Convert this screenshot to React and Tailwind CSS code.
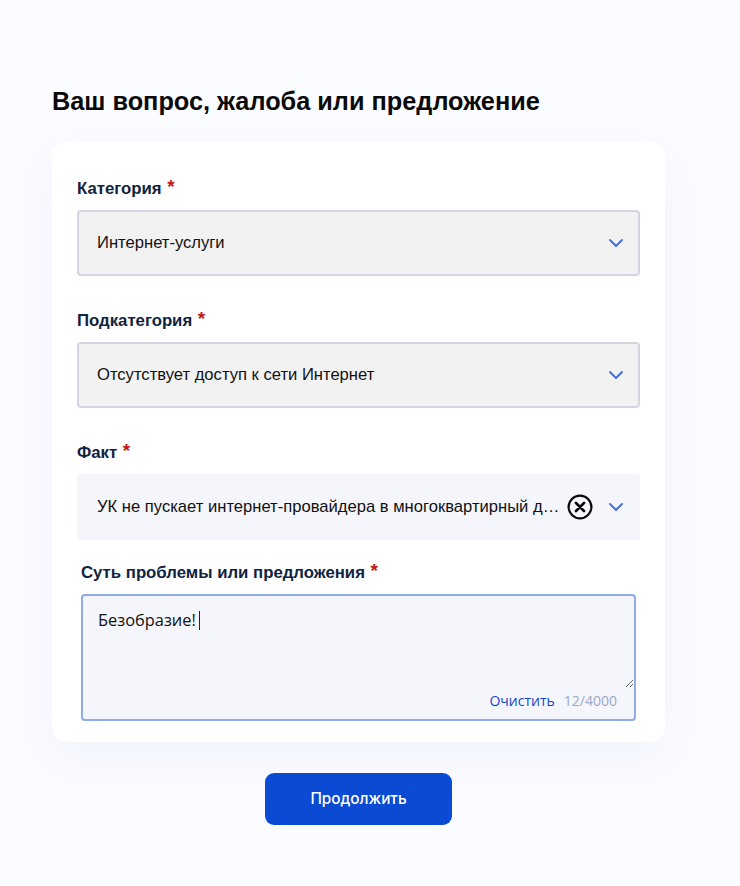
import { ChevronDown } from 'lucide-react';

const SANS = "font-['Liberation_Sans',sans-serif]";

const Label = ({ children, className = '' }) => (
  <div className={`${SANS} text-[16.75px] leading-[20px] font-bold text-[#10233f] ${className}`}>
    {children} <span className="relative -top-px ml-px text-[19px] leading-[16px] text-[#c01818]">*</span>
  </div>
);

const Select = ({ value, bordered, onClear }) => (
  <div className={`flex h-[66px] items-center rounded-[4px] ${bordered ? 'border-2 border-[#d3d5e2] bg-[#f2f2f3] pl-[18px] pr-[10px]' : 'bg-[#f5f6fb] pl-[20px] pr-[12px]'}`}>
    <div className={`${SANS} min-w-0 flex-1 truncate text-[16.6px] text-[#111]`}>{value}</div>
    {onClear && (
      <svg width="26" height="26" viewBox="0 0 26 26" fill="none" stroke="#0b0b0b" strokeWidth="2.2" strokeLinecap="round" className="ml-[7px] mr-[11px] shrink-0">
        <circle cx="13" cy="13" r="11.4" />
        <path d="M9 9l8 8M17 9l-8 8" strokeWidth="2.6" />
      </svg>
    )}
    <ChevronDown size={24} strokeWidth={1.8} className="shrink-0 text-[#3f6be0]" />
  </div>
);

export default function App() {
  return (
    <div className="min-h-[886px] bg-[#fbfcff] px-[52px] pt-[86px]">
      <h1 className={`${SANS} text-[25.3px] leading-[30px] font-bold text-[#0a0a0a]`}>Ваш вопрос, жалоба или предложение</h1>

      <div className="mt-[26px] h-[600px] w-[613px] rounded-[14px] bg-white px-[25px] pt-[37px] shadow-[0_16px_50px_rgba(70,100,220,0.06)]">
        <Label>Категория</Label>
        <div className="mt-[11px]"><Select value="Интернет-услуги" bordered /></div>

        <Label className="mt-[35px]">Подкатегория</Label>
        <div className="mt-[11px]"><Select value="Отсутствует доступ к сети Интернет" bordered /></div>

        <Label className="mt-[35px]">Факт</Label>
        <div className="mt-[11px]"><Select value="УК не пускает интернет-провайдера в многоквартирный дом" onClear /></div>

        <div className="px-[4px]">
          <Label className="mt-[23px]">Суть проблемы или предложения</Label>
          <div className="relative mt-[11px] flex h-[127px] flex-col rounded-[4px] border-2 border-[#8fabea] bg-[#f5f6fb]">
            <textarea
              readOnly
              defaultValue="Безобразие!"
              className="h-[92px] w-full resize-y bg-transparent px-[15px] py-[14px] font-['Open_Sans',sans-serif] text-[16.4px] leading-[20px] text-[#111] outline-none"
            />
            <span className="absolute left-[116px] top-[15px] h-[19px] w-px bg-[#222]" />
            <div className="flex flex-1 -translate-y-[3px] items-center justify-end gap-[9px] pr-[17px] font-['Open_Sans',sans-serif] text-[14px] leading-[18px] font-medium">
              <span className="text-[#0f46cc]">Очистить</span>
              <span className="text-[#9aa9cb]">12/4000</span>
            </div>
          </div>
        </div>
      </div>

      <div className="mt-[31px] flex w-[613px] justify-center">
        <button className="h-[52px] w-[187px] rounded-[9px] bg-[#0b4ad2] font-['Inter',sans-serif] text-[15.3px] font-medium text-white">Продолжить</button>
      </div>
    </div>
  );
}
